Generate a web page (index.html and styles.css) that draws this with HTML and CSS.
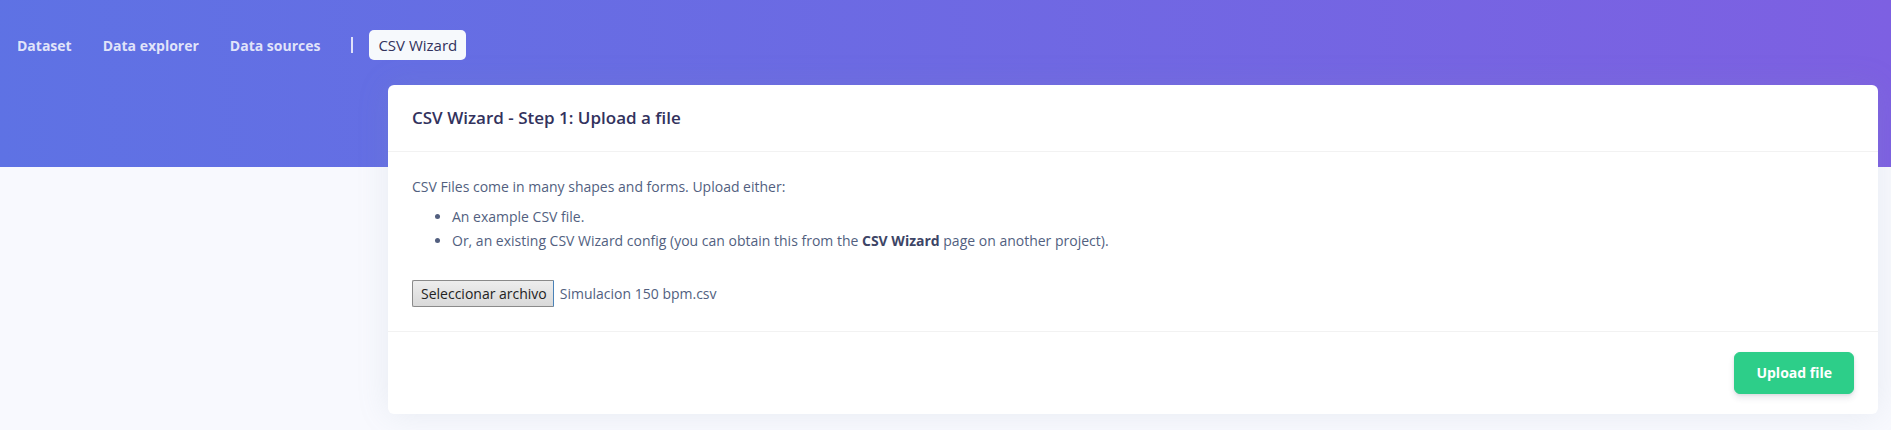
FILE: index.html
```html
<!DOCTYPE html>
<html lang="en">
<head>
<meta charset="utf-8">
<title>CSV Wizard</title>
<link rel="stylesheet" href="styles.css">
</head>
<body>
<div class="page">
  <nav class="topnav">
    <a class="nav-link" href="#">Dataset</a>
    <a class="nav-link" href="#">Data explorer</a>
    <a class="nav-link" href="#">Data sources</a>
    <span class="nav-sep"></span>
    <a class="nav-pill" href="#">CSV Wizard</a>
  </nav>
  <section class="card">
    <header class="card-header">
      <h3 class="card-title">CSV Wizard - Step 1: Upload a file</h3>
    </header>
    <div class="card-body">
      <p class="intro">CSV Files come in many shapes and forms. Upload either:</p>
      <ul class="options">
        <li>An example CSV file.</li>
        <li>Or, an existing CSV Wizard config (you can obtain this from the <strong>CSV Wizard</strong> page on another project).</li>
      </ul>
      <div class="file-row">
        <span class="file-btn">Seleccionar archivo</span>
        <span class="file-name">Simulacion 150 bpm.csv</span>
      </div>
    </div>
    <footer class="card-footer">
      <button class="btn-success" type="button">Upload file</button>
    </footer>
  </section>
</div>
</body>
</html>
```

FILE: styles.css
```css
* { box-sizing: border-box; }

html, body {
  margin: 0;
  padding: 0;
}

body {
  background: #f8f9fe;
  font-family: "Open Sans", "Liberation Sans", sans-serif;
  color: #525f7f;
}

.page {
  background: linear-gradient(87deg, #5e72e4 0%, #7d60e2 100%) top left / 100% 167px no-repeat, #f8f9fe;
  padding: 30px 13px 16px 0;
}

.topnav {
  display: flex;
  align-items: center;
  padding-left: 17px;
  height: 30px;
}

.nav-link {
  color: rgba(255, 255, 255, 0.82);
  font-size: 14px;
  font-weight: 700;
  line-height: 21px;
  text-decoration: none;
  margin-right: 31px;
}

.nav-sep {
  width: 2px;
  height: 16px;
  background: rgba(255, 255, 255, 0.8);
  margin-right: 16px;
}

.nav-pill {
  background: #f6f9fc;
  color: #32325d;
  font-size: 15px;
  font-weight: 400;
  line-height: 21px;
  padding: 5px 9px 4px;
  border-radius: 5px;
  text-decoration: none;
}

.card {
  margin: 25px 0 0 388px;
  background: #fff;
  border-radius: 6px;
  box-shadow: 0 0 2rem 0 rgba(136, 152, 170, 0.15);
  overflow: hidden;
}

.card-header {
  padding: 20px 24px;
  border-bottom: 1px solid rgba(0, 0, 0, 0.05);
}

.card-title {
  margin: 0;
  font-size: 17px;
  font-weight: 600;
  line-height: 1.5;
  color: #32325d;
}

.card-body {
  padding: 24px;
  font-size: 14px;
}

.intro {
  margin: 0 0 8px;
  line-height: 21px;
}

.options {
  margin: 0 0 27px;
  padding-left: 40px;
  line-height: 24px;
}

.options strong {
  font-weight: 700;
  color: #3d4566;
}

.file-row {
  display: flex;
  align-items: center;
  height: 27px;
}

.file-btn {
  display: inline-block;
  font-size: 14px;
  line-height: 21px;
  color: #222;
  padding: 2px 6px 2px 8px;
  border: 1px solid #8a8a8a;
  border-right-color: #4a82b8;
  border-radius: 2px 0 0 2px;
  background: linear-gradient(#ededed, #d9d9d9);
}

.file-name {
  margin-left: 6px;
  line-height: 21px;
  color: #525f7f;
}

.card-footer {
  display: flex;
  justify-content: flex-end;
  padding: 20px 24px;
  border-top: 1px solid rgba(0, 0, 0, 0.05);
}

.btn-success {
  font-family: inherit;
  font-size: 14px;
  font-weight: 700;
  line-height: 20px;
  color: #fff;
  background: #2dce89;
  border: 1px solid #2dce89;
  border-radius: 6px;
  padding: 10px 21px;
  box-shadow: 0 4px 6px rgba(50, 50, 93, 0.11), 0 1px 3px rgba(0, 0, 0, 0.08);
}
```
